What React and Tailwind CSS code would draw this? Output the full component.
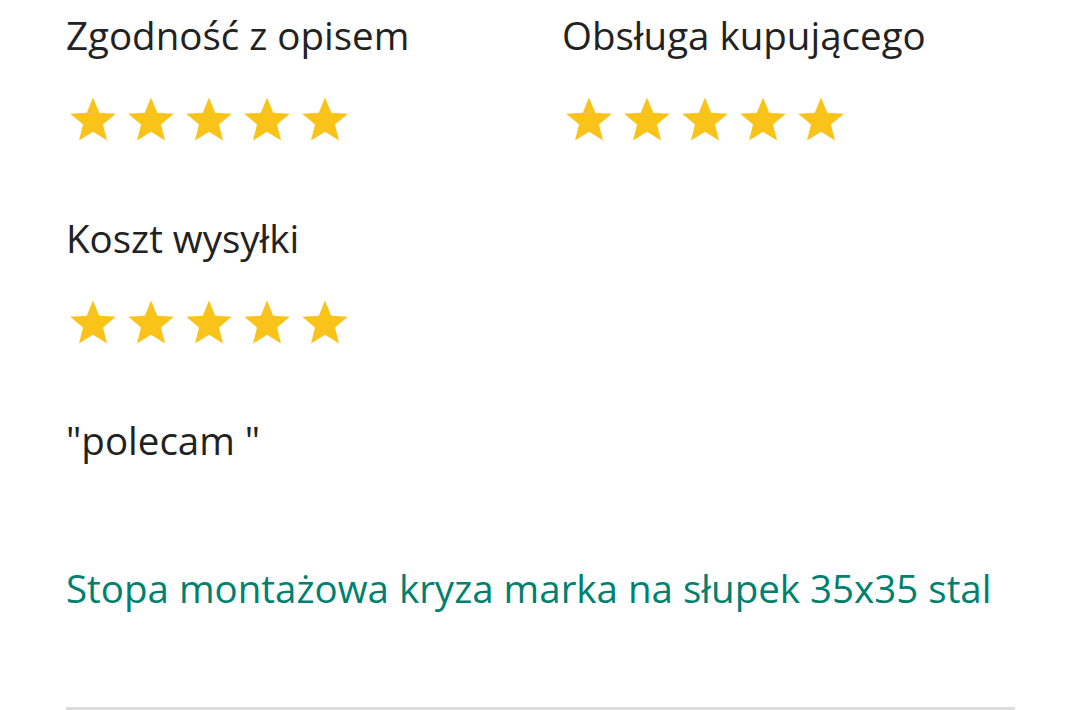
import React from 'react';

const ratings = [
  { label: 'Zgodność z opisem', value: 5 },
  { label: 'Obsługa kupującego', value: 5 },
  { label: 'Koszt wysyłki', value: 5 },
];

function Star() {
  return (
    <svg viewBox="0 0 24 24" className="w-[48px] h-[48px]" aria-hidden="true">
      <polygon
        fill="#f9c31a"
        points="12,1.2 15.1,8.9 23.4,9.4 17,14.7 19,22.8 12,18.4 5,22.8 7,14.7 0.6,9.4 8.9,8.9"
      />
    </svg>
  );
}

function Rating({ label, value }) {
  return (
    <div className="flex flex-col">
      <div className="text-[38.5px] leading-[54px] text-[#222]">{label}</div>
      <div className="flex gap-[10px] mt-[33px] ml-[3px]">
        {Array.from({ length: value }).map((_, i) => (
          <Star key={i} />
        ))}
      </div>
    </div>
  );
}

export default function App() {
  return (
    <div className="min-h-[710px] bg-white font-['Open_Sans',sans-serif] px-[66px] pt-[8px]">
      <div className="grid grid-cols-[496px_1fr] gap-y-[68px]">
        {ratings.map((r) => (
          <Rating key={r.label} {...r} />
        ))}
      </div>

      <p className="text-[38.5px] leading-[54px] text-[#222] mt-[67px]">"polecam "</p>

      <a href="#" className="block text-[38.5px] leading-[54px] text-[#00806e] mt-[94px]">
        Stopa montażowa kryza marka na słupek 35x35 stal
      </a>

      <div className="mt-[92px] h-[3px] bg-[#dcdcdc] w-[949px]" />
    </div>
  );
}
